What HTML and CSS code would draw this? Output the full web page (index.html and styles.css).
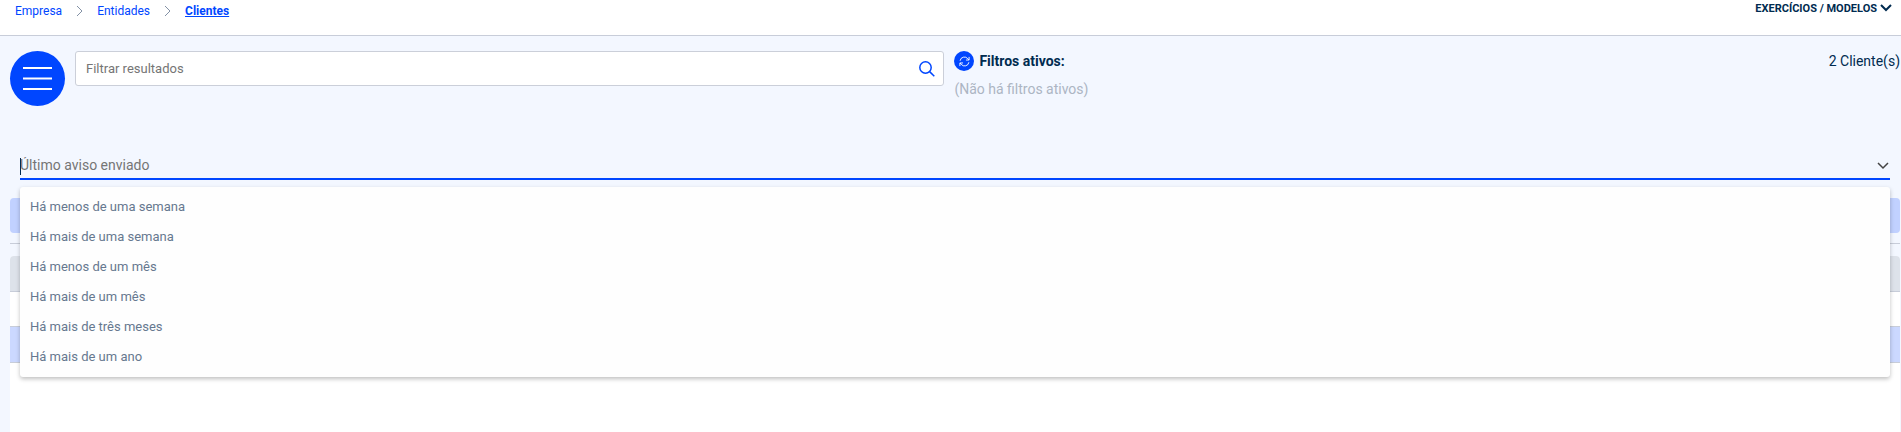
FILE: index.html
```
<!DOCTYPE html>
<html lang="pt">
<head>
<meta charset="UTF-8">
<title>Clientes</title>
<meta name="viewport" content="width=device-width, initial-scale=1">
<link rel="stylesheet" href="styles.css">
</head>

<body>
<header class="top-bar">
  <nav class="breadcrumb">
    <a href="#">Empresa</a>
    <svg class="crumb-arrow" viewBox="0 0 7 12"><path d="M1 1l5 5-5 5"/></svg>
    <a href="#">Entidades</a>
    <svg class="crumb-arrow" viewBox="0 0 7 12"><path d="M1 1l5 5-5 5"/></svg>
    <a href="#" class="current">Clientes</a>
  </nav>
  <button class="models-btn" type="button">
    EXERCÍCIOS / MODELOS
    <svg viewBox="0 0 12 8"><path d="M1 1l5 5 5-5"/></svg>
  </button>
</header>

<main class="page">
  <div class="toolbar">
    <button class="menu-btn" type="button" aria-label="Menu">
      <svg viewBox="0 0 29 23"><path d="M0 1h29M0 11.5h29M0 22h29"/></svg>
    </button>

    <div class="search-box">
      <input type="text" class="search-input" placeholder="Filtrar resultados" aria-label="Filtrar resultados">
      <button class="search-btn" type="button" aria-label="Pesquisar">
        <svg viewBox="0 0 16 16"><circle cx="6.5" cy="6.5" r="5.7"/><path d="M10.6 10.6l4.7 4.7"/></svg>
      </button>
    </div>

    <div class="filters">
      <div class="filters-title">
        <button class="refresh-btn" type="button" aria-label="Limpar filtros">
          <svg viewBox="0 0 12 12"><path d="M1.2 5.2A4.7 4.7 0 0 1 9.6 3L11 4.4M11 1v3.4H7.6M10.8 6.8A4.7 4.7 0 0 1 2.4 9L1 7.6M1 11V7.6h3.4"/></svg>
        </button>
        <strong>Filtros ativos:</strong>
      </div>
      <div class="filters-empty">(Não há filtros ativos)</div>
    </div>

    <div class="total">2 Cliente(s)</div>
  </div>

  <!-- Filter drop-down, open -->
  <div class="select-field">
    <span class="caret"></span>
    <input type="text" class="select-input" role="combobox" aria-expanded="true" aria-controls="aviso-list" aria-label="Último aviso enviado" placeholder="Último aviso enviado">
    <svg class="select-arrow" viewBox="0 0 12 8"><path d="M1 1l5 5 5-5"/></svg>
    <ul class="select-list" id="aviso-list" role="listbox">
      <li role="option">Há menos de uma semana</li>
      <li role="option">Há mais de uma semana</li>
      <li role="option">Há menos de um mês</li>
      <li role="option">Há mais de um mês</li>
      <li role="option">Há mais de três meses</li>
      <li role="option">Há mais de um ano</li>
    </ul>
  </div>

  <div class="action-bar"></div>
  <hr class="divider">

  <section class="grid">
    <div class="grid-head"></div>
    <div class="grid-row"></div>
    <div class="grid-row selected"></div>
  </section>
</main>
</body>
</html>
```
FILE: styles.css
```
* {
  box-sizing: border-box;
}

body {
  margin: 0;
  min-height: 100vh;
  display: flex;
  flex-direction: column;
  font-family: Roboto, Arial, sans-serif;
  font-size: 14px;
  color: #002b50;
  background: #f3f7ff;
}

button {
  padding: 0;
  border: none;
  background: none;
  font-family: inherit;
  color: inherit;
  cursor: pointer;
}

input {
  font-family: inherit;
  color: inherit;
  outline: none;
}

input::placeholder {
  color: #757575;
  opacity: 1;
}

svg {
  display: block;
  fill: none;
  stroke: currentColor;
}

/* Top bar */
.top-bar {
  display: flex;
  justify-content: space-between;
  align-items: flex-start;
  height: 36px;
  padding: 0 9px 0 15px;
  background: #fff;
  border-bottom: 1px solid #c8cdd9;
}

.breadcrumb {
  display: flex;
  align-items: center;
  gap: 14px;
  height: 22px;
  font-size: 12px;
}

.breadcrumb a {
  color: #0046ff;
  text-decoration: none;
}

.breadcrumb .current {
  font-weight: bold;
  text-decoration: underline;
}

.crumb-arrow {
  width: 7px;
  height: 12px;
  color: #8391a5;
}

.models-btn {
  display: flex;
  align-items: center;
  gap: 3px;
  height: 16px;
  font-size: 11px;
  font-weight: bold;
}

.models-btn svg {
  width: 12px;
  height: 8px;
  stroke-width: 2;
}

/* Toolbar */
.page {
  flex: 1;
  display: flex;
  flex-direction: column;
  padding: 15px 1px 0 10px;
}

.toolbar {
  display: flex;
  align-items: flex-start;
  gap: 10px;
}

.menu-btn {
  display: flex;
  align-items: center;
  justify-content: center;
  width: 55px;
  height: 55px;
  border-radius: 50%;
  color: #fff;
  background: #0046ff;
}

.menu-btn svg {
  width: 29px;
  height: 23px;
  stroke-width: 2;
}

.search-box {
  display: flex;
  align-items: center;
  width: 46%;
  height: 35px;
  padding-right: 8px;
  border: 1px solid #cbcfd9;
  border-radius: 3px;
  background: #fff;
}

.search-input {
  flex: 1;
  padding: 0 10px;
  border: none;
  font-size: 13px;
  background: none;
}

.search-btn {
  color: #0046ff;
}

.search-btn svg {
  width: 16px;
  height: 16px;
  stroke-width: 1.5;
}

.filters {
  flex: 1;
}

.filters-title {
  display: flex;
  align-items: center;
  gap: 5px;
  height: 20px;
}

.refresh-btn {
  display: flex;
  align-items: center;
  justify-content: center;
  width: 20px;
  height: 20px;
  border-radius: 50%;
  color: #fff;
  background: #0046ff;
}

.refresh-btn svg {
  width: 11px;
  height: 11px;
}

.filters-empty {
  margin-top: 8px;
  line-height: 20px;
  color: #acb5c3;
}

.total {
  line-height: 20px;
}

/* Select with open list */
.select-field {
  position: relative;
  display: flex;
  align-items: center;
  height: 30px;
  margin: 44px 10px 0;
  border-bottom: 2px solid #0046ff;
}

.caret {
  position: absolute;
  left: 0;
  bottom: 3px;
  width: 1px;
  height: 17px;
  background: #002b50;
}

.select-input {
  flex: 1;
  padding: 2px 0 0;
  border: none;
  font-size: 14px;
  background: none;
}

.select-arrow {
  width: 12px;
  height: 8px;
  margin: 4px 1px 0 0;
  color: #444;
  stroke-width: 1.5;
}

.select-list {
  position: absolute;
  top: 37px;
  left: 0;
  right: 0;
  z-index: 10;
  margin: 0;
  padding: 5px 0;
  list-style: none;
  background: #fefefe;
  border-radius: 3px;
  box-shadow: 0 2px 4px rgba(0, 0, 0, 0.25);
}

.select-list li {
  padding: 0 10px;
  font-size: 13px;
  line-height: 30px;
  color: #66788f;
  cursor: pointer;
}

/* Content under the list */
.action-bar {
  height: 35px;
  margin-top: 18px;
  border-radius: 4px;
  background: #c1d1ff;
}

.divider {
  width: 100%;
  margin: 10px 0 12px;
  border: none;
  border-top: 1px solid #c8cdd9;
}

.grid {
  flex: 1;
  border-radius: 4px 4px 0 0;
  overflow: hidden;
  background: #fff;
}

.grid-head,
.grid-row {
  height: 36px;
  border-bottom: 1px solid #c8cdd9;
}

.grid-head {
  background: #dde2ea;
}

.grid-row {
  height: 35px;
}

.grid-row.selected {
  height: 36px;
  background: #cbd8ff;
}
```
